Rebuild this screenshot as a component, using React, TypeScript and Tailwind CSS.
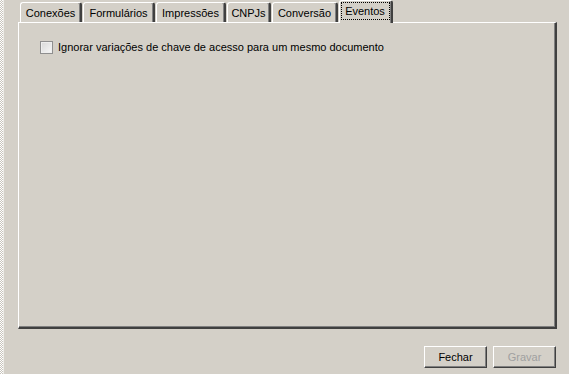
import React from 'react';

const tabs = [
  { label: 'Conexões', w: 'w-[62px]' },
  { label: 'Formulários', w: 'w-[72px]' },
  { label: 'Impressões', w: 'w-[70px]' },
  { label: 'CNPJs', w: 'w-[44px]' },
  { label: 'Conversão', w: 'w-[66px]' },
];

export default function App() {
  return (
    <div className="w-[569px] h-[374px] bg-[#d4d0c8] flex text-[11px] text-black font-['Liberation_Sans',Arial,sans-serif] overflow-hidden">
      {/* splitter edge on the left */}
      <div className="w-[3px] h-full bg-[repeating-conic-gradient(#c8c4bc_0%_25%,#ffffff_0%_50%)] bg-[length:2px_2px]" />
      <div className="w-px h-full bg-[#ecebe7]" />

      <div className="flex-1 flex flex-col pl-[14px] pr-[12px]">
        {/* tab strip */}
        <div className="h-[22px] flex items-end gap-[1px] pl-[2px]">
          {tabs.map((t) => (
            <div
              key={t.label}
              className={`${t.w} h-[20px] border-l border-t border-white border-r-2 border-r-[#404040] rounded-t-[3px] shadow-[inset_-1px_0_0_#808080] flex items-center justify-center pt-[1px] leading-none`}
            >
              {t.label}
            </div>
          ))}
          <div className="relative z-10 w-[54px] h-[23px] -mb-px border-l border-t border-white border-r-2 border-r-[#404040] rounded-t-[3px] shadow-[inset_-1px_0_0_#808080] bg-[#d4d0c8] flex justify-center pt-[1px] pr-[1px]">
            <span className="w-[49px] h-[18px] border border-dotted border-black flex items-center justify-center leading-none">
              Eventos
            </span>
          </div>
        </div>

        {/* tab page */}
        <div className="h-[307px] border-l border-t border-white border-r-2 border-b-2 border-r-[#404040] border-b-[#404040] shadow-[inset_-1px_-1px_0_#808080] pt-[17px] pl-[21px]">
          <label className="flex items-center gap-[5px] h-[14px]">
            <span className="w-[13px] h-[13px] border border-[#8f8f8f] bg-gradient-to-br from-[#d8d8d8] to-[#f8f8f8] shadow-[inset_0_0_0_1px_#eeeeee]" />
            <span className="leading-none">Ignorar variações de chave de acesso para um mesmo documento</span>
          </label>
        </div>

        {/* buttons */}
        <div className="mt-[17px] flex justify-end gap-[6px] pr-[1px]">
          <button className="w-[63px] h-[22px] border-l border-t border-white border-r border-b border-r-[#404040] border-b-[#404040] shadow-[inset_-1px_-1px_0_#808080] bg-[#d4d0c8] text-black leading-none">
            Fechar
          </button>
          <button
            disabled
            className="w-[63px] h-[22px] border-l border-t border-white border-r border-b border-r-[#404040] border-b-[#404040] shadow-[inset_-1px_-1px_0_#808080] bg-[#d4d0c8] text-[#a0a0a0] leading-none"
          >
            Gravar
          </button>
        </div>
      </div>
    </div>
  );
}
